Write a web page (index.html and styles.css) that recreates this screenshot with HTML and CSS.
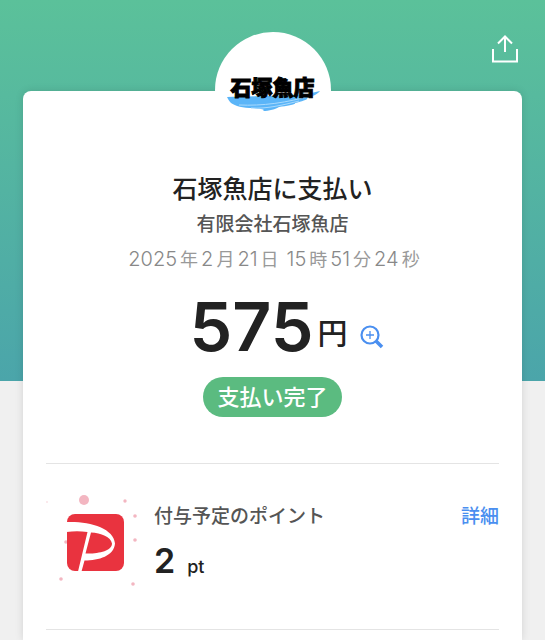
FILE: index.html
```html
<!DOCTYPE html>
<html lang="ja">
<head>
  <meta charset="utf-8">
  <meta name="viewport" content="width=device-width, initial-scale=1">
  <title>石塚魚店に支払い</title>
  <link rel="stylesheet" href="styles.css">
</head>
<body>
  <header class="header">
    <button type="button" class="share-btn" aria-label="共有">
      <svg width="26" height="28" viewBox="0 0 26 28" fill="none" stroke="#fff" stroke-width="2">
        <path d="M1 14v12.500h24V14"/>
        <path d="M13 17V1.500"/>
        <path d="M6 8.500l7-7 7 7"/>
      </svg>
    </button>
  </header>

  <main class="card">
    <div class="shop-logo">
      <svg class="brush" width="94" height="22" viewBox="0 0 94 22">
        <path d="M0 6C20 5 60 5 80 3L93 0C91 3 86 5 80 7C82 8 76 10 68 12C70 13 60 15 52 16C49 18 42 20 36 20C39 18 33 18 26 17C16 17 8 15 4 12C2 10 1 8 0 6z" fill="#5bb5f8"/>
        <path d="M12 14C35 15 60 12 86 4M24 17C40 18 56 14 72 10" fill="none" stroke="#a9dafd" stroke-width="1"/>
      </svg>
      <span class="shop-logo-text">石塚魚店</span>
    </div>

    <section class="payment">
      <h1 class="title">石塚魚店に支払い</h1>
      <p class="company">有限会社石塚魚店</p>
      <p class="date"><span class="num">2025</span>年<span class="num">2</span>月<span class="num">21</span>日 <span class="num">15</span>時<span class="num">51</span>分<span class="num">24</span>秒</p>
      <div class="amount">
        <span class="amount-num">575</span>
        <span class="amount-unit">円</span>
        <button type="button" class="zoom-btn" aria-label="拡大">
          <svg width="24" height="24" viewBox="0 0 24 24" fill="none" stroke="#4a8ff0">
            <circle cx="10" cy="10" r="8.500" stroke-width="2.200"/>
            <path d="M10 6v8M6 10h8" stroke-width="1.300"/>
            <path d="M16 16l6 6" stroke-width="3.500"/>
          </svg>
        </button>
      </div>
      <span class="badge">支払い完了</span>
    </section>

    <section class="points">
      <svg class="points-icon" width="92" height="92" viewBox="0 0 92 92">
        <g fill="#f3b6c1">
          <circle cx="38" cy="5" r="5"/>
          <circle cx="79" cy="6" r="1.700"/>
          <circle cx="89" cy="21" r="1.800"/>
          <circle cx="89" cy="45" r="1.800"/>
          <circle cx="20" cy="47" r="1.800"/>
          <circle cx="15" cy="84" r="1.800"/>
          <circle cx="87" cy="89" r="1.800"/>
          <circle cx="1" cy="7" r="1" opacity="0.400"/>
        </g>
        <rect x="21" y="19" width="57" height="57" rx="8" fill="#e9333f"/>
        <path d="M20.500 27C43 26 68 33 69 48.500C68 61 53 65.500 38.500 65.500L35.500 76.500H32L41.500 37C34 36 28 36 20.500 37zM45 37.500L39.500 58.500C52 59 66 56 66 48.500C65 42 55 38 45 37.500z" fill="#fff" fill-rule="evenodd"/>
      </svg>
      <div class="points-body">
        <div class="points-head">
          <h2 class="points-title">付与予定のポイント</h2>
          <a href="#" class="detail-link">詳細</a>
        </div>
        <p class="points-value">2<span class="points-unit">pt</span></p>
      </div>
    </section>
  </main>
</body>
</html>
```
FILE: styles.css
```css
* {
  box-sizing: border-box;
}

body {
  margin: 0;
  min-height: 100vh;
  display: flex;
  flex-direction: column;
  font-family: Inter, "Noto Sans CJK JP", sans-serif;
  color: #222;
  background: #f0f0f0 linear-gradient(#5bc19a, #4ba5aa) no-repeat;
  background-size: 100% 381px;
}

h1,
h2,
p {
  margin: 0;
}

button {
  padding: 0;
  border: none;
  background: none;
  cursor: pointer;
}

svg {
  display: block;
}

.header {
  display: flex;
  justify-content: flex-end;
  padding: 35px 27px 28px;
}

.card {
  position: relative;
  flex: 1;
  margin: 0 23px;
  padding: 80px 23px 0;
  background: #fff;
  border-radius: 8px 8px 0 0;
  box-shadow: 0 0 8px rgba(0, 0, 0, 0.12);
}

.shop-logo {
  position: absolute;
  top: -59px;
  left: 50%;
  width: 116px;
  height: 116px;
  margin-left: -58px;
  border-radius: 50%;
  background: #fff;
}

.brush {
  position: absolute;
  top: 59px;
  left: 12px;
}

.shop-logo-text {
  position: absolute;
  top: 41px;
  left: 16px;
  font-size: 21px;
  line-height: 30px;
  font-weight: 900;
  color: #000;
  white-space: nowrap;
  -webkit-text-stroke: 1px #000;
}

.payment {
  display: flex;
  flex-direction: column;
  align-items: center;
  padding-bottom: 46px;
  text-align: center;
}

.title {
  font-size: 25px;
  line-height: 36px;
  font-weight: 500;
}

.company {
  margin-top: 4px;
  font-size: 19px;
  line-height: 28px;
  font-weight: 500;
  color: #555;
}

.date {
  margin-top: 6px;
  font-size: 18px;
  line-height: 28px;
  color: #999;
}

.date .num {
  margin: 0 3px;
  font-size: 20px;
  font-weight: 300;
  color: #888;
}

.amount {
  display: flex;
  align-items: flex-end;
  margin-top: 16px;
  padding-left: 28px;
}

.amount-num {
  font-size: 68px;
  line-height: 72px;
  font-weight: 600;
}

.amount-unit {
  margin-left: 4px;
  font-size: 30px;
  line-height: 58px;
  font-weight: 500;
}

.zoom-btn {
  margin: 0 0 13px 12px;
}

.badge {
  margin-top: 15px;
  padding: 0 14px;
  border-radius: 20px;
  font-size: 22px;
  line-height: 40px;
  font-weight: 500;
  color: #fff;
  background: #5bbb80;
}

.points {
  display: flex;
  gap: 16px;
  padding: 31px 0 40px;
  border-top: 1px solid #e4e4e4;
  border-bottom: 1px solid #e4e4e4;
}

.points-icon {
  flex: none;
}

.points-body {
  flex: 1;
  padding-top: 8px;
}

.points-head {
  display: flex;
  justify-content: space-between;
  line-height: 28px;
}

.points-title {
  font-size: 19px;
  font-weight: 500;
  color: #555;
}

.detail-link {
  font-size: 19px;
  font-weight: 500;
  color: #4a8ff0;
  text-decoration: none;
}

.points-value {
  margin-top: 8px;
  font-size: 34px;
  line-height: 44px;
  font-weight: 600;
}

.points-unit {
  margin-left: 12px;
  font-size: 18px;
  font-weight: 500;
}
```
